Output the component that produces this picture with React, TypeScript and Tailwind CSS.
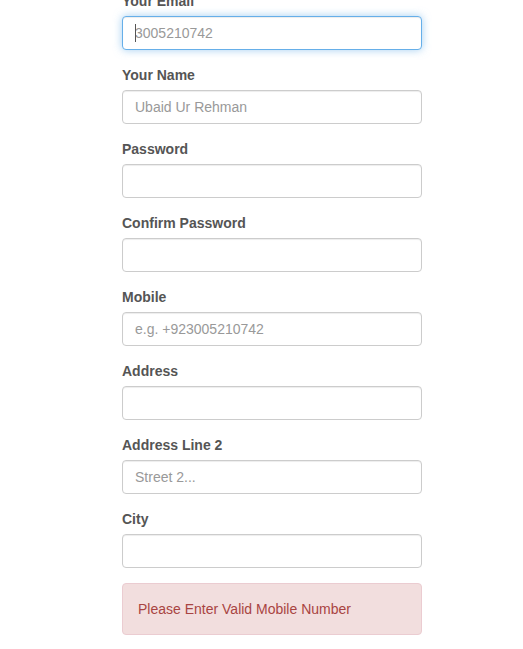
import React from "react";

const fields: { label: string; placeholder?: string; type?: string }[] = [
  { label: "Your Name", placeholder: "Ubaid Ur Rehman" },
  { label: "Password", type: "password" },
  { label: "Confirm Password", type: "password" },
  { label: "Mobile", placeholder: "e.g. +923005210742" },
  { label: "Address" },
  { label: "Address Line 2", placeholder: "Street 2..." },
  { label: "City" },
];

const inputCls =
  "block w-full h-[34px] px-[12px] py-[6px] text-[14px] leading-[20px] text-[#555] bg-white border border-[#ccc] rounded-[4px] shadow-[inset_0_1px_1px_rgba(0,0,0,0.075)] placeholder:text-[#999] outline-none";

export default function App() {
  return (
    <div
      className="min-h-[649px] bg-white overflow-hidden"
      style={{ fontFamily: '"Liberation Sans", Arial, sans-serif' }}
    >
      <div className="ml-[122px] w-[300px] mt-[-9px]">
        <div className="mb-[15px]">
          <label className="block mb-[5px] text-[14px] leading-[20px] font-bold text-[#555]">
            Your Email
          </label>
          <div className="relative">
            <input
              className="block w-full h-[34px] px-[12px] py-[6px] text-[14px] leading-[20px] text-[#555] bg-white border border-[#66afe9] rounded-[4px] shadow-[inset_0_1px_1px_rgba(0,0,0,0.075),0_0_8px_rgba(102,175,233,0.6)] placeholder:text-[#999] outline-none"
              placeholder="3005210742"
              readOnly
            />
            <span className="absolute left-[13px] top-[8px] w-px h-[18px] bg-[#555]" />
          </div>
        </div>
        {fields.map((f) => (
          <div className="mb-[15px]" key={f.label}>
            <label className="block mb-[5px] text-[14px] leading-[20px] font-bold text-[#555]">
              {f.label}
            </label>
            <input
              className={inputCls}
              type={f.type ?? "text"}
              placeholder={f.placeholder}
              readOnly
            />
          </div>
        ))}
        <div className="px-[15px] py-[15px] border border-[#ebccd1] bg-[#f2dede] rounded-[4px] text-[14px] leading-[20px] text-[#a94442]">
          Please Enter Valid Mobile Number
        </div>
      </div>
    </div>
  );
}
